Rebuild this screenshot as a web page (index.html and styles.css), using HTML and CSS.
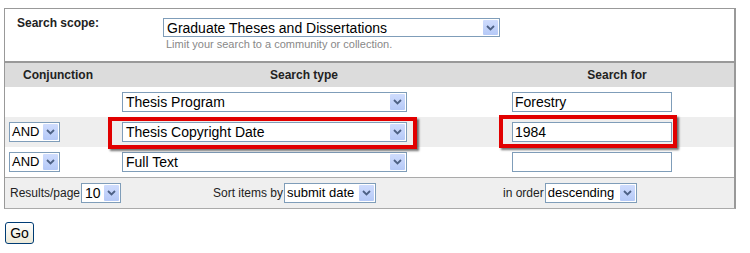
FILE: index.html
```html
<!DOCTYPE html>
<html lang="en">
<head>
    <meta charset="UTF-8">
    <title>Advanced Search</title>
    <link rel="stylesheet" href="styles.css">
</head>
<body>
    <div class="search-box">
        <div class="scope">
            <div class="scope-label">Search scope:</div>
            <div class="scope-field">
                <div class="select select-scope">
                    <span class="select-text">Graduate Theses and Dissertations</span>
                    <span class="select-arrow"><svg width="9" height="6" viewBox="0 0 9 6"><path d="M1 1 L4.5 4.5 L8 1" fill="none" stroke="#4d6185" stroke-width="1.8"/></svg></span>
                </div>
                <div class="hint">Limit your search to a community or collection.</div>
            </div>
        </div>

        <div class="row row-head">
            <div class="cell head-conj">Conjunction</div>
            <div class="cell head-center">Search type</div>
            <div class="cell head-center">Search for</div>
        </div>

        <div class="row">
            <div class="cell cell-conj"></div>
            <div class="cell cell-type">
                <div class="select select-type">
                    <span class="select-text">Thesis Program</span>
                    <span class="select-arrow"><svg width="9" height="6" viewBox="0 0 9 6"><path d="M1 1 L4.5 4.5 L8 1" fill="none" stroke="#4d6185" stroke-width="1.8"/></svg></span>
                </div>
            </div>
            <div class="cell cell-query"><div class="input">Forestry</div></div>
        </div>

        <div class="row row-alt">
            <div class="cell cell-conj">
                <div class="select select-conj">
                    <span class="select-text">AND</span>
                    <span class="select-arrow"><svg width="9" height="6" viewBox="0 0 9 6"><path d="M1 1 L4.5 4.5 L8 1" fill="none" stroke="#4d6185" stroke-width="1.8"/></svg></span>
                </div>
            </div>
            <div class="cell cell-type">
                <div class="select select-type marked marked-type">
                    <span class="select-text">Thesis Copyright Date</span>
                    <span class="select-arrow"><svg width="9" height="6" viewBox="0 0 9 6"><path d="M1 1 L4.5 4.5 L8 1" fill="none" stroke="#4d6185" stroke-width="1.8"/></svg></span>
                </div>
            </div>
            <div class="cell cell-query"><div class="input marked marked-query">1984</div></div>
        </div>

        <div class="row">
            <div class="cell cell-conj">
                <div class="select select-conj">
                    <span class="select-text">AND</span>
                    <span class="select-arrow"><svg width="9" height="6" viewBox="0 0 9 6"><path d="M1 1 L4.5 4.5 L8 1" fill="none" stroke="#4d6185" stroke-width="1.8"/></svg></span>
                </div>
            </div>
            <div class="cell cell-type">
                <div class="select select-type">
                    <span class="select-text">Full Text</span>
                    <span class="select-arrow"><svg width="9" height="6" viewBox="0 0 9 6"><path d="M1 1 L4.5 4.5 L8 1" fill="none" stroke="#4d6185" stroke-width="1.8"/></svg></span>
                </div>
            </div>
            <div class="cell cell-query"><div class="input"></div></div>
        </div>

        <div class="footer">
            <div class="opt opt-first">
                <span class="opt-label">Results/page</span>
                <div class="select select-rpp">
                    <span class="select-text">10</span>
                    <span class="select-arrow"><svg width="9" height="6" viewBox="0 0 9 6"><path d="M1 1 L4.5 4.5 L8 1" fill="none" stroke="#4d6185" stroke-width="1.8"/></svg></span>
                </div>
            </div>
            <div class="opt">
                <span class="opt-label">Sort items by</span>
                <div class="select select-sort">
                    <span class="select-text">submit date</span>
                    <span class="select-arrow"><svg width="9" height="6" viewBox="0 0 9 6"><path d="M1 1 L4.5 4.5 L8 1" fill="none" stroke="#4d6185" stroke-width="1.8"/></svg></span>
                </div>
            </div>
            <div class="opt">
                <span class="opt-label">in order</span>
                <div class="select select-order">
                    <span class="select-text">descending</span>
                    <span class="select-arrow"><svg width="9" height="6" viewBox="0 0 9 6"><path d="M1 1 L4.5 4.5 L8 1" fill="none" stroke="#4d6185" stroke-width="1.8"/></svg></span>
                </div>
            </div>
        </div>
    </div>

    <button class="go">Go</button>
</body>
</html>
```

FILE: styles.css
```css
* {
    box-sizing: border-box;
    margin: 0;
    padding: 0;
}

body {
    font-family: "Liberation Sans", Arial, sans-serif;
    background-color: white;
    color: #000;
    padding: 8px 0 0 4px;
}

.search-box {
    width: 732px;
    border: 1px solid #999;
    border-right-width: 2px;
    border-bottom-color: #aaa;
}

/* scope */
.scope {
    display: flex;
    height: 54px;
    padding-top: 9px;
    border-bottom: 2px solid #999;
}

.scope-label {
    width: 158px;
    padding-left: 12px;
    margin-top: -2px;
    line-height: 14px;
    font-size: 12px;
    font-weight: bold;
    color: #222;
}

.hint {
    font-size: 11px;
    color: #888;
    padding: 1px 0 0 3px;
    line-height: 13px;
}

/* select / input */
.select {
    display: flex;
    align-items: stretch;
    height: 20px;
    border: 1px solid #7f9db9;
    background: white;
    font-size: 14px;
    line-height: 18px;
}

.select-text {
    flex: 1;
    padding-left: 3px;
    white-space: nowrap;
    overflow: hidden;
}

.select-arrow {
    width: 15px;
    margin: 1px;
    display: flex;
    align-items: center;
    justify-content: center;
    background: linear-gradient(#cfdcfd, #b5c9f7);
    border-radius: 1px;
}

.select-scope { width: 337px; height: 19px; }
.select-type { width: 285px; }
.select-conj { width: 51px; }
.select-conj .select-text { padding-left: 2px; font-size: 13px; }
.select-rpp { width: 40px; }
.select-sort { width: 92px; }
.select-order { width: 92px; }
.select-sort .select-text,
.select-order .select-text { padding-left: 2px; font-size: 13px; }

.input {
    width: 160px;
    height: 20px;
    border: 1px solid #7f9db9;
    background: white;
    font-size: 14px;
    line-height: 18px;
    padding-left: 2px;
}

/* rows */
.row {
    display: grid;
    grid-template-columns: 103px 392px 1fr;
    height: 30px;
    align-items: center;
}

.row-head {
    height: 24px;
    background-color: #dcdcdc;
    font-size: 12px;
    font-weight: bold;
    color: #222;
}

.row-alt {
    background-color: #eeeeee;
}

.head-conj { padding-left: 18px; }
.head-center { text-align: center; }

.cell-conj { padding-left: 4px; }
.cell-type { padding-left: 14px; }
.cell-query { padding-left: 12px; }

/* red highlight */
.marked {
    position: relative;
}

.marked::after {
    content: "";
    position: absolute;
    border: 4px solid #e10000;
    box-shadow: 2px 2px 2px rgba(0, 0, 0, 0.55);
}

.marked-type::after { top: -6px; left: -15px; right: -11px; bottom: -8px; }
.marked-query::after { top: -8px; left: -14px; right: -6px; bottom: -7px; }

/* footer */
.footer {
    display: grid;
    grid-template-columns: 208px 290px 1fr;
    align-items: center;
    height: 31px;
    background-color: #efefef;
    border-top: 1px solid #aaa;
}

.opt {
    display: flex;
    align-items: center;
    gap: 1px;
}

.opt-first { padding-left: 5px; }

.opt-label {
    font-size: 12px;
    color: #222;
}

/* go */
.go {
    margin: 13px 0 0 1px;
    width: 29px;
    height: 22px;
    font-family: "Liberation Sans", Arial, sans-serif;
    font-size: 14px;
    border: 1px solid #003c74;
    border-radius: 3px;
    background: linear-gradient(#ffffff, #ece9d8);
    color: #000;
}
```
